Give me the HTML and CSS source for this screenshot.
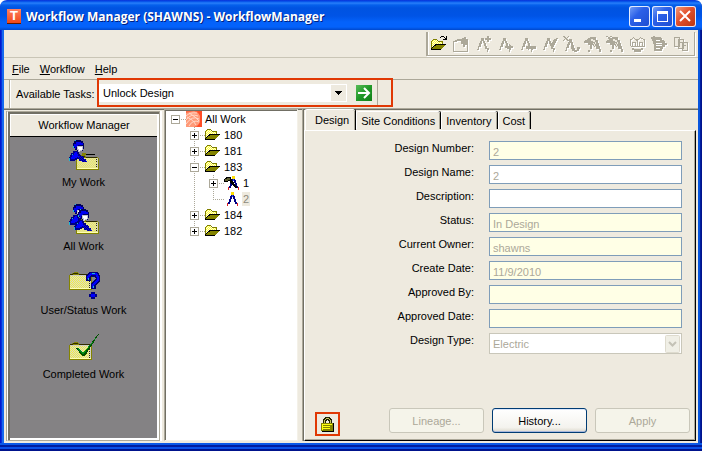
FILE: index.html
```html
<!DOCTYPE html>
<html lang="en">
<head>
<meta charset="utf-8">
<title>Workflow Manager (SHAWNS) - WorkflowManager</title>
<link rel="stylesheet" href="styles.css">
</head>
<body>
<svg class="defs" width="0" height="0" aria-hidden="true">
  <defs>
    <pattern id="checker" width="2" height="2" patternUnits="userSpaceOnUse">
      <rect width="2" height="2" fill="#ffff38"/><rect width="1" height="1" fill="#fffce0"/><rect x="1" y="1" width="1" height="1" fill="#fffce0"/>
    </pattern>
    <pattern id="card" width="2" height="2" patternUnits="userSpaceOnUse">
      <rect width="2" height="2" fill="#f4f040"/><rect width="1" height="1" fill="#d8d8d0"/><rect x="1" y="1" width="1" height="1" fill="#d8d8d0"/>
    </pattern>
    <pattern id="mesh" width="2" height="2" patternUnits="userSpaceOnUse">
      <rect width="1" height="1" fill="#0000d8"/><rect x="1" y="1" width="1" height="1" fill="#0000d8"/>
    </pattern>
    <symbol id="folder" viewBox="0 0 16 12">
      <path fill="#808000" d="M0 2h1V1h1V0h4v1h1v1h5v3h3v1h-1v1h-1v1h-1v1h-1v1h-1v1H0z"/>
      <path fill="url(#checker)" d="M1 2h1V1h4v1h1v1h4v2H5v1H4v1H3v1H2v1H1z"/>
      <path fill="#000" d="M4 5h11v1h-1v1h-1v1h-1v1h-1v1h-1v1H0V9h1V8h1V7h1V6h1z"/>
      <path fill="#848400" d="M5 6h9v1h-1v1h-1v1h-1v1H1V9h1V8h1V7h2z"/>
    </symbol>
    <symbol id="compass" viewBox="0 0 16 16">
      <path fill="#000084" d="M7 2h3v3h1v3h1v3h1v2h-2v-2h-1V8H9V6H8v2H7v3H6v2H4v-2h1V8h1V5h1z"/>
      <path fill="#ffde00" d="M7 1h3v3H7z"/><path fill="#2846f0" d="M8 4h1v2H8z"/>
      <path fill="#e02020" d="M3 12h1v3H3zM13 12h1v3h-1z"/>
    </symbol>
    <symbol id="case" viewBox="0 0 23 18" preserveAspectRatio="none">
      <path fill="#848400" d="M0 3h1V2h2V1h2V0h4v1h1v1h12v1h1v15H0z"/>
      <path fill="#302c00" d="M1 2h3V1h5v1h12v1H10V2H4v1H1z"/>
      <path fill="url(#card)" d="M1 4h20v12H1z"/><path fill="#d0d0c0" d="M1 3h20v1H1zM21 4h1v12h-1z"/>
      <path fill="#ffffb0" d="M1 16h21v1H1z"/>
      <path fill="#303000" d="M20 5h1v1h-1zM20 7h1v1h-1zM20 9h1v1h-1zM20 11h1v1h-1zM20 13h1v1h-1zM20 15h1v1h-1z"/>
    </symbol>
    <symbol id="person" viewBox="0 0 20 24">
      <path fill="#000060" d="M6 0h6v1h2v2h1v6h-1v2h-3v1H8v-2H6V8H4V3h1V1h1z"/>
      <path fill="#0000f0" d="M7 2h5v1h2v2H9v2H7v2H6V7H5V4h2z"/>
      <path fill="#c0c0d0" d="M8 6h6v4h-1v1h-2v1H9v-2H8z"/><path fill="#fff" d="M9 7h4v3h-2v1h-1V9H9z"/>
      <path fill="#000084" d="M6 11h3v1h1v2h1v1h1v1h2v1h1v2h2v2h1v1h-5v-1h-3v-2H8v1H6v1H0v-4h1v-2h1v-2h2v-2h2z"/>
      <path fill="#0000ff" d="M6 12h2v2h1v2h1v1H8v1H6v1H2v-2h1v-2h2v-2h1z"/>
      <path fill="url(#mesh)" d="M9 16h5v1h1v2h2v2h1v1h-5v-1h-3v-2H9z"/>
      <path fill="#18b8d8" d="M6 0h1v1H6zM3 14h1v1H3zM0 18h1v3H0zM4 6h1v2H4z"/>
    </symbol>
    <symbol id="dividers" viewBox="0 0 16 16">
      <path fill="#aca899" d="M6 2h3v3h1v2h1v3h1v2h2v2h-1v2h-1v-3h-2v-3H9V7H8V5H7v3H6v3H4v3H2v-1h1v-3h1V7h1V5h1z"/>
    </symbol>
    <symbol id="hammer" viewBox="0 0 18 16">
      <path fill="#aca899" d="M3 3h1V2h2V1h6v3h2v3h1v3h1v3h1v3h-2v-3h-3v-2h-2l-2-2v4H6v3H4v-2h2V9H4V7H0V5h1V4h2z"/>
      <path fill="#eeeadf" d="M7 3h2v1h2v2h1v2h-1V6H9V5H7zM9 7h1v1h1v2h1v1h-1v-1h-1V8H9z"/>
    </symbol>
  </defs>
</svg>

<div class="window">
  <header class="titlebar">
    <span class="app-icon" aria-hidden="true">T</span>
    <h1>Workflow Manager (SHAWNS) - WorkflowManager</h1>
    <div class="caption-buttons">
      <button class="caption" type="button" aria-label="Minimize"><svg width="21" height="21"><path fill="#fff" d="M5 13h7v3H5z"/></svg></button>
      <button class="caption" type="button" aria-label="Maximize"><svg width="21" height="21"><path fill="#fff" fill-rule="evenodd" d="M5 5h11v11H5zM6 8v7h9V8z"/></svg></button>
      <button class="caption close" type="button" aria-label="Close"><svg width="21" height="21"><path stroke="#fff" stroke-width="2" d="M5 5l10 10M15 5L5 15"/></svg></button>
    </div>
  </header>

  <div class="client">
    <div class="toolbar-row">
      <div class="toolbar" role="toolbar" aria-label="Design tools">
        <button type="button" aria-label="Open"><svg class="crisp" width="17" height="16" viewBox="0 0 17 16"><use href="#folder" x="0" y="3" width="16" height="12"/><path fill="#000" d="M9 1h1V0h3v1h1v1h1V0h1v4h-4V3h2V2h-1V1h-3v1H9z"/></svg></button>
        <button type="button" aria-label="Close design" disabled><svg class="crisp" width="17" height="16"><path fill="#aca899" fill-rule="evenodd" d="M0 5h2V4h2V3h5V2h2V1h2v2h2v13H0zM1 6v9h13V9h-2v2h-2V8H8V5H4v1z"/></svg></button>
        <button type="button" aria-label="New design" disabled><svg class="crisp" width="17" height="16"><use href="#dividers" width="16" height="16"/><path fill="#aca899" d="M12 0h2v2h2v2h-2v2h-2V4h-2V2h2z"/></svg></button>
        <button type="button" aria-label="Send design" disabled><svg class="crisp" width="17" height="16"><use href="#dividers" width="16" height="16"/><path fill="#aca899" d="M8 10h4V8h1v1h1v1h2v2h-2v1h-1v1h-1v-2H8z"/></svg></button>
        <button type="button" aria-label="Receive design" disabled><svg class="crisp" width="17" height="16"><use href="#dividers" width="16" height="16"/><path fill="#aca899" d="M7 10h2V9h1v1h7v3h-7v1H9v-1H7z"/></svg></button>
        <button type="button" aria-label="Approve design" disabled><svg class="crisp" width="17" height="16"><use href="#dividers" width="16" height="16"/><path fill="#aca899" d="M8 6h2v2h1V6h1V4h1V3h2V2h2v1h-1v2h-1v2h-1v2h-1v2h-2V9H9V8H8z"/></svg></button>
        <button type="button" aria-label="Delete design" disabled><svg class="crisp" width="17" height="16"><path fill="#aca899" d="M0 0h2v1h1v1h1V1h1V0h1v1H5v1H4v1h1v1h1v1H4V4H3V3H2v1H1v1H0V4h1V3h1V2H1V1H0zM6 3h3v3h1v3h1v3h1v2h2v-3h3v2h-1v2h-2v1h-3v-1h-2v-2H8V7H7v2H6v3H4v3H2v-1h1v-3h1V8h1V6h1z"/></svg></button>
        <button type="button" aria-label="Build work request" disabled><svg class="crisp" width="18" height="16"><use href="#hammer" width="18" height="16"/></svg></button>
        <button type="button" aria-label="Cancel work request" disabled><svg class="crisp" width="18" height="16"><use href="#hammer" width="18" height="16"/><path fill="#aca899" d="M0 0h2v1h2V0h2v1H4v2H2V1H0z"/></svg></button>
        <button type="button" aria-label="Compare" disabled><svg class="crisp" width="17" height="16"><path fill="none" stroke="#aca899" d="M1.500 10V4l3-2.500 3 2.500 1 0 3-2.500 4 2.500v6.500h-14M3.500 10V6h3v4M8.500 4v6M10.500 10V6h3v4"/><path fill="#aca899" d="M3 12h2v1h7v-1h2v2h-2v2H5v-2H3z"/></svg></button>
        <button type="button" aria-label="Transfer" disabled><svg class="crisp" width="17" height="16"><path fill="#aca899" fill-rule="evenodd" d="M0 1h2V0h2v1h6v1h1v2h2v1h1v2h2v2h-2v2h-2v2h-1v2H3V8H2V5H1V3H0zM5 4v1h4V4zM5 7v1h6V7zM5 9v1h6V9zM5 12v1h4v-1z"/></svg></button>
        <button type="button" aria-label="Copy pages" disabled><svg class="crisp" width="17" height="16"><path fill="#eeeadf" stroke="#aca899" d="M1.500 1.500h5v9h-5zM5.500 3.500h5v9h-5zM9.500 6.500h5v8h-5zM11 9.500h2M7 6.500h2"/></svg></button>
      </div>
    </div>

    <nav class="menubar" aria-label="Main menu">
      <a href="#file"><u>F</u>ile</a>
      <a href="#workflow"><u>W</u>orkflow</a>
      <a href="#help"><u>H</u>elp</a>
    </nav>

    <div class="taskbar">
      <label for="task">Available Tasks:</label>
      <div class="task-box">
        <select id="task"><option>Unlock Design</option></select>
        <button class="go" type="button" aria-label="Run task"><svg width="16" height="16"><path fill="none" stroke="#fff" stroke-width="2" d="M2 8h11M8 3l5 5-5 5"/></svg></button>
        <span class="rule"></span>
      </div>
    </div>

    <main class="panes">
      <aside class="shortcuts">
        <h2>Workflow Manager</h2>
        <a class="shortcut" href="#my"><svg class="crisp" width="32" height="32"><use href="#case" x="8" y="15" width="23" height="15"/><use href="#person" x="1" y="0" width="20" height="24"/><path fill="#848400" d="M14 13h4v2h-4z"/><path d="M18 14h9v1h-9z"/></svg>My Work</a>
        <a class="shortcut" href="#all"><svg class="crisp" width="32" height="32"><use href="#case" x="8" y="15" width="23" height="15"/><use href="#person" x="1" y="0" width="20" height="24"/><use href="#person" x="6" y="5" width="20" height="24"/></svg>All Work</a>
        <a class="shortcut" href="#status"><svg class="crisp" width="32" height="32"><use href="#case" x="1" y="4" width="23" height="18"/><path fill="none" stroke="#000070" stroke-width="5" d="M20 13V9l3-3h5l2 3v3l-5 5v4"/><path fill="none" stroke="#0000ff" stroke-width="2" d="M20 11V9l3-3h5l2 3v3l-5 5v3"/><path fill="#18b8d8" d="M24 5h3v1h-3zM20 10h1v2h-1zM25 18h1v2h-1z"/><path fill="#000084" d="M23 24h4v2h2v3h-2v2h-4v-2h-2v-3h2z"/><path fill="#00f" d="M23 26h4v3h-4z"/></svg>User/Status Work</a>
        <a class="shortcut" href="#done"><svg class="crisp" width="32" height="32"><use href="#case" x="1" y="10" width="23" height="18"/><path fill="#005000" d="M8 16h2l5 6L30 2h1L17 24h-3z"/><path fill="#009018" d="M9 17l6 6L31 2 15 21l-5-5z"/></svg>Completed Work</a>
      </aside>

      <section class="tree" aria-label="Work tree">
        <div class="node">
          <span class="cell dash"><button class="toggle" type="button" aria-label="Collapse All Work"></button></span>
          <svg width="16" height="16"><path fill="#ff6844" d="M0 0h16v16H0z"/><path fill="#ff9a78" d="M0 2L8 0l6 3v10l-6 3H0z"/><path fill="none" stroke="#ffd8c8" d="M0 5q4-4 11-3M0 9q5-7 12-4M0 13q6-9 13-5M3 15q4-7 10-4M3 2q7 4 10 8M1 6q7 3 9 8"/><path fill="#ff4e26" d="M11 0h5v16h-5l3-5V5z"/></svg><span class="name">All Work</span>
        </div>
        <div class="node">
          <span class="cell"></span><span class="cell dash stem"><button class="toggle plus" type="button" aria-label="Expand 180"></button></span>
          <svg class="crisp" width="16" height="12"><use href="#folder"/></svg><span class="name">180</span>
        </div>
        <div class="node">
          <span class="cell"></span><span class="cell dash stem"><button class="toggle plus" type="button" aria-label="Expand 181"></button></span>
          <svg class="crisp" width="16" height="12"><use href="#folder"/></svg><span class="name">181</span>
        </div>
        <div class="node">
          <span class="cell"></span><span class="cell dash stem"><button class="toggle" type="button" aria-label="Collapse 183"></button></span>
          <svg class="crisp" width="16" height="12"><use href="#folder"/></svg><span class="name">183</span>
        </div>
        <div class="node">
          <span class="cell"></span><span class="cell stem"></span><span class="cell dash stem"><button class="toggle plus" type="button" aria-label="Expand 1"></button></span>
          <svg class="crisp" width="16" height="16"><use href="#compass" x="1" y="0" width="16" height="16"/><path d="M0 4h1V3h1V2h5v2h1v2h1v1h1v2h1v1h1v1h1v2h-2v-1h-1v-1H9v-1H8V9H7V8H6V6H4v1H0z"/><path fill="#606030" d="M1 4h2V3h3v2H4v1H1z"/></svg><span class="name">1</span>
        </div>
        <div class="node">
          <span class="cell"></span><span class="cell stem"></span><span class="cell dash stem last"></span>
          <svg class="crisp" width="16" height="16"><use href="#compass"/></svg><span class="name selected">2</span>
        </div>
        <div class="node">
          <span class="cell"></span><span class="cell dash stem"><button class="toggle plus" type="button" aria-label="Expand 184"></button></span>
          <svg class="crisp" width="16" height="12"><use href="#folder"/></svg><span class="name">184</span>
        </div>
        <div class="node">
          <span class="cell"></span><span class="cell dash stem last"><button class="toggle plus" type="button" aria-label="Expand 182"></button></span>
          <svg class="crisp" width="16" height="12"><use href="#folder"/></svg><span class="name">182</span>
        </div>
      </section>

      <section class="detail">
        <div class="tabs" role="tablist">
          <button class="tab active" type="button" role="tab" aria-selected="true">Design</button>
          <button class="tab" type="button" role="tab">Site Conditions</button>
          <button class="tab" type="button" role="tab">Inventory</button>
          <button class="tab" type="button" role="tab">Cost</button>
        </div>
        <form class="page">
          <div class="fields">
            <label for="number">Design Number:</label><input id="number" value="2" disabled>
            <label for="name">Design Name:</label><input id="name" class="editable" value="2">
            <label for="description">Description:</label><input id="description" class="editable">
            <label for="status">Status:</label><input id="status" value="In Design" disabled>
            <label for="owner">Current Owner:</label><input id="owner" value="shawns" disabled>
            <label for="created">Create Date:</label><input id="created" value="11/9/2010" disabled>
            <label for="approver">Approved By:</label><input id="approver" disabled>
            <label for="approved">Approved Date:</label><input id="approved" disabled>
            <label for="type">Design Type:</label>
            <span class="type-box"><select id="type" disabled><option>Electric</option></select><svg width="15" height="18"><rect x="0.5" y="0.5" width="14" height="17" rx="1" fill="#f0efe6" stroke="#dedbce"/><path fill="none" stroke="#c4c2b6" stroke-width="2" d="M4 7l3.500 3.500L11 7"/></svg></span>
          </div>
          <div class="actions">
            <span class="lock" role="img" aria-label="Locked"><svg class="crisp" width="13" height="15"><path fill="none" stroke="#202000" stroke-width="3" d="M3.500 7V3.500l2-2h2l2 2V7"/><path fill="none" stroke="#c8c860" d="M3.500 7V3.500l2-2h2l2 2V7"/><path d="M1 6h12v9H1z"/><path fill="#848400" d="M0 6h12v8H0z"/><path fill="#ffff10" d="M1 7h10v1H1zM2 9h7v1H2zM2 11h7v1H2zM1 7h1v6H1z"/></svg></span>
            <button class="push" type="button" disabled>Lineage...</button>
            <button class="push default" type="button">History...</button>
            <button class="push" type="button" disabled>Apply</button>
          </div>
        </form>
      </section>
    </main>
  </div>
</div>
</body>
</html>
```
FILE: styles.css
```css
* { box-sizing: border-box; }

body {
  margin: 0;
  background: #fff;
  color: #000;
  font: 11px/16px "Liberation Sans", Arial, sans-serif;
}

button, input, select { font: inherit; color: inherit; margin: 0; }
button { border: 0; padding: 0; background: none; }
a { color: inherit; text-decoration: none; }
svg { display: block; flex: none; }
.defs { position: absolute; }
.crisp { shape-rendering: crispEdges; }

.window {
  display: flex;
  flex-direction: column;
  min-height: 100vh;
  padding: 0 4px 8px;
  border-radius: 7px 7px 0 0;
  overflow: hidden;
  background:
    linear-gradient(#0a58e8 0 2px, #001ea0 2px 4px, #0a50e8 4px 6px, #00138c 6px 8px) bottom / 100% 8px no-repeat,
    linear-gradient(90deg, #0019cf 0 1px, #0831d9 1px 2px, #166aee 2px 4px) left / 4px 100% no-repeat,
    linear-gradient(90deg, #0855dd 0 2px, #001ea0 2px 3px, #00138c 3px 4px) right / 4px 100% no-repeat;
}

.titlebar {
  display: flex;
  align-items: center;
  height: 30px;
  margin: 0 -4px;
  padding: 3px 6px 0 7px;
  color: #fff;
  background: linear-gradient(#0831d9 0, #0a60f0 2px, #2a80fa 3px, #0560ec 5px, #0053e1 8px, #0054e6 16px, #0462fb 22px, #0462fb 27px, #0048cc 30px);
}

.titlebar h1 {
  flex: 1;
  margin: 0 0 0 5px;
  font: bold 12px/18px "Open Sans", "Noto Sans", sans-serif;
  text-shadow: 1px 1px 0 #002080;
  white-space: nowrap;
}

.app-icon {
  width: 14px;
  height: 15px;
  background: linear-gradient(#ff8060, #f04818);
  border-bottom: 1px solid #601800;
  font: bold 13px/14px "Liberation Sans", sans-serif;
  text-align: center;
}

.caption-buttons { display: flex; gap: 2px; }

.caption {
  width: 21px;
  height: 21px;
  border-radius: 3px;
  background: linear-gradient(135deg, #7ba4f8, #2c60e8 40%, #1c4cd0);
  box-shadow: inset 0 0 0 1px #e4ecff;
}

.caption.close { background: linear-gradient(135deg, #f4a080, #e2502c 45%, #b83410); }

.client {
  flex: 1;
  display: flex;
  flex-direction: column;
  background: #eeeadf;
}

.toolbar-row {
  display: flex;
  justify-content: flex-end;
  padding: 2px 3px 1px;
  border-bottom: 1px solid #c9c5b6;
}

.toolbar {
  display: flex;
  height: 24px;
  padding-right: 2px;
  border: solid #aca899;
  border-width: 0 1px 1px 2px;
  box-shadow: inset 1px 0 #fff, 1px 1px #fff;
}

.toolbar button {
  display: flex;
  align-items: center;
  justify-content: center;
  width: 22px;
}

.toolbar button:disabled svg { filter: drop-shadow(1px 1px 0 #fff); }

.menubar {
  display: flex;
  gap: 10px;
  height: 22px;
  padding: 3px 8px;
  border-bottom: 1px solid #aca899;
}

.taskbar {
  display: flex;
  height: 28px;
  padding-left: 5px;
}

.taskbar label {
  display: flex;
  align-items: center;
  width: 90px;
  padding-left: 6px;
  border-left: 1px solid #aca899;
  box-shadow: inset 1px 0 #fff;
  white-space: nowrap;
}

.task-box {
  display: flex;
  align-items: center;
  width: 292px;
  margin-bottom: 3px;
  outline: 2px solid #e03804;
  position: relative;
}

.task-box select {
  width: 248px;
  height: 18px;
  padding: 0 4px;
  border: 0;
  appearance: none;
  background:
    linear-gradient(#000 0 0) right 5px top 7px / 7px 1px no-repeat,
    linear-gradient(#000 0 0) right 6px top 8px / 5px 1px no-repeat,
    linear-gradient(#000 0 0) right 7px top 9px / 3px 1px no-repeat,
    linear-gradient(#000 0 0) right 8px top 10px / 1px 1px no-repeat,
    linear-gradient(#eeeadf 0 0) right 1px center / 15px 16px no-repeat,
    #fff;
}

.go {
  width: 16px;
  height: 16px;
  margin-left: 9px;
  background: linear-gradient(135deg, #58bc58, #209828 50%, #108018);
}

.rule { width: 6px; align-self: stretch; border-right: 1px solid #aca899; }

.panes {
  flex: 1;
  display: flex;
  border-top: 1px solid #aca899;
  box-shadow: inset 0 1px #716f64;
  padding-bottom: 2px;
}

.shortcuts {
  width: 153px;
  margin: 2px 0 0 3px;
  border: 1px solid;
  border-color: #aca899 #aca899 #aca899 #fff;
  background: #848284;
  box-shadow: inset 2px 2px #716f64, inset -2px -2px #fff, -1px 0 #aca899, 2px 0 #fff;
  padding: 2px;
}

.shortcuts h2 {
  height: 22px;
  margin: 0 0 4px;
  border: solid #fff;
  border-width: 1px 0 0 1px;
  box-shadow: 0 1px #000;
  background: #eeeadf;
  font: 11px/20px "Liberation Sans", Arial, sans-serif;
  text-align: center;
}

.shortcut {
  display: flex;
  flex-direction: column;
  align-items: center;
  gap: 2px;
  height: 64px;
}

.tree {
  width: 134px;
  margin-left: 4px;
  padding: 1px 0 0 2px;
  border: 1px solid #aca899;
  border-right-color: #f4f1e8;
  border-bottom-color: #f4f1e8;
  box-shadow: inset 1px 1px #716f64;
  background: #fff;
}

.node { display: flex; align-items: center; height: 16px; }

.cell {
  display: flex;
  align-items: center;
  align-self: stretch;
  width: 19px;
  padding-left: 4px;
}

.dash { background: repeating-linear-gradient(90deg, #aca899 0 1px, transparent 1px 2px) 8px 8px / 11px 1px no-repeat; }
.stem { background: repeating-linear-gradient(#aca899 0 1px, transparent 1px 2px) 8px 0 / 1px 16px no-repeat; }
.dash.stem {
  background:
    repeating-linear-gradient(90deg, #aca899 0 1px, transparent 1px 2px) 8px 8px / 11px 1px no-repeat,
    repeating-linear-gradient(#aca899 0 1px, transparent 1px 2px) 8px 0 / 1px 16px no-repeat;
}
.dash.stem.last { background-size: 11px 1px, 1px 8px; }

.toggle {
  width: 9px;
  height: 9px;
  border: 1px solid #aca899;
  background: linear-gradient(#000 0 0) center / 5px 1px no-repeat, #fff;
}

.toggle.plus {
  background:
    linear-gradient(#000 0 0) center / 5px 1px no-repeat,
    linear-gradient(#000 0 0) center / 1px 5px no-repeat,
    #fff;
}

.name { margin-left: 2px; padding: 0 1px; }
.name.selected { background: #eeeadf; color: #8c897c; line-height: 14px; }

.detail {
  flex: 1;
  display: flex;
  flex-direction: column;
  margin-left: 4px;
  padding: 0 2px 0 0;
  border-left: 1px solid #aca899;
  box-shadow: inset 1px 0 #716f64;
}

.tabs { display: flex; align-items: flex-end; height: 21px; padding-left: 2px; }

.tab {
  height: 18px;
  margin: 0 0 1px 1px;
  padding: 1px 5px 0 4px;
  border: solid #fff;
  border-width: 1px 0 0 1px;
  border-radius: 2px 2px 0 0;
  box-shadow: inset -1px 0 #aca899, 1px 0 #000;
  background: #eeeadf;
}

.tab.active {
  height: 21px;
  margin: 0;
  padding: 0 6px 1px 9px;
  position: relative;
}

.page {
  flex: 1;
  display: flex;
  flex-direction: column;
  justify-content: space-between;
  margin-left: 1px;
  padding: 10px 5px 4px 10px;
  border: solid;
  border-width: 1px;
  border-color: #fff #000 #000 #fff;
  box-shadow: inset -1px -1px #aca899;
}

.fields {
  display: grid;
  grid-template-columns: 1fr 193px;
  gap: 5px 15px;
  padding-right: 8px;
}

.fields label { height: 19px; line-height: 15px; text-align: right; }

.fields input {
  width: 100%;
  height: 19px;
  padding: 2px 3px 0;
  border: 1px solid #7f9db9;
  border-radius: 0;
  background: #ffffe6;
  color: #aca899;
}

.fields input.editable { background: #fff; }

.type-box {
  display: flex;
  align-items: center;
  height: 21px;
  padding-right: 1px;
  border: 1px solid #c9c7ba;
  background: #fff;
}

.type-box select {
  flex: 1;
  height: 17px;
  padding: 0 3px;
  border: 0;
  appearance: none;
  background: #fff;
  color: #aca899;
  opacity: 1;
}

.actions { display: flex; align-items: flex-start; gap: 8px; }

.lock {
  display: flex;
  align-items: center;
  justify-content: center;
  width: 25px;
  height: 24px;
  margin: 4px auto 0 0;
  border: 2px solid #e03804;
}

.push {
  width: 95px;
  height: 25px;
  border: 1px solid #003c74;
  border-radius: 3px;
  background: linear-gradient(#fff, #f4f3ee 80%, #dcd8cc);
}

.push:disabled { border-color: #c9c7ba; background: #f5f4ea; color: #aca899; }
.push.default { box-shadow: inset 0 -1px #a8b8dc, inset 0 1px #dce8fc; }
```
